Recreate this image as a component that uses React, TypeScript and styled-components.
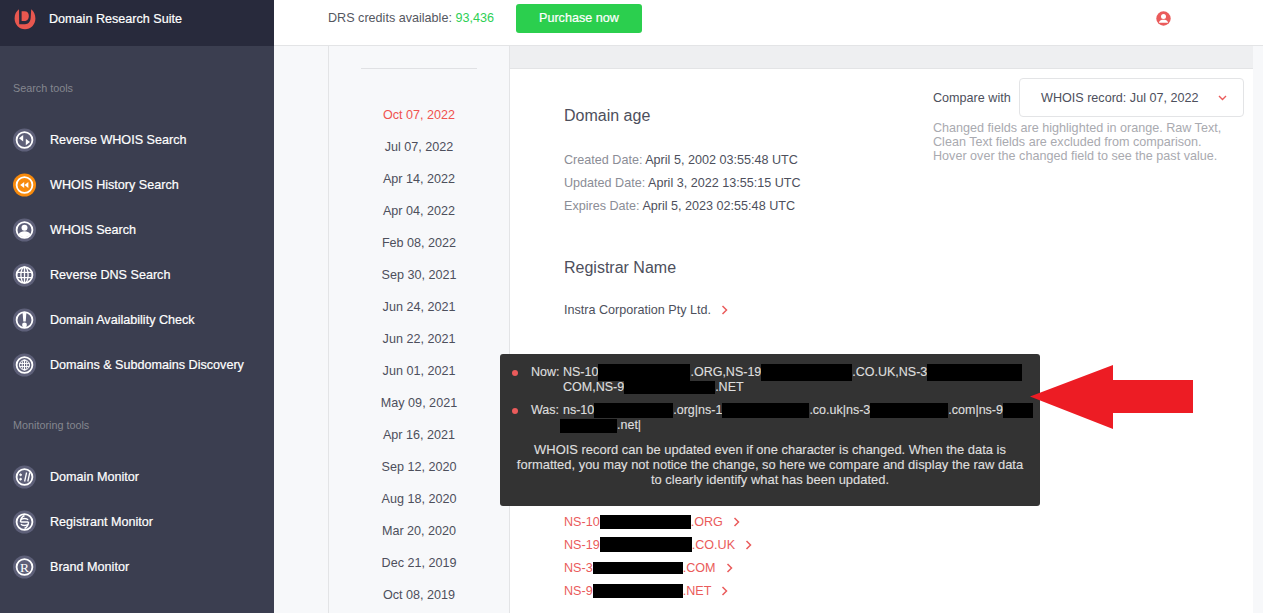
import type { ReactNode } from "react";
import styled, { createGlobalStyle } from "styled-components";

const dates = [
  "Oct 07, 2022",
  "Jul 07, 2022",
  "Apr 14, 2022",
  "Apr 04, 2022",
  "Feb 08, 2022",
  "Sep 30, 2021",
  "Jun 24, 2021",
  "Jun 22, 2021",
  "Jun 01, 2021",
  "May 09, 2021",
  "Apr 16, 2021",
  "Sep 12, 2020",
  "Aug 18, 2020",
  "Mar 20, 2020",
  "Dec 21, 2019",
  "Oct 08, 2019",
];

// has to exist before the tool list below uses it
const BrandGlyph = styled.text`
  fill: #fff;
  font-family: "Liberation Serif", serif;
  font-size: 13.5px;
  text-anchor: middle;
  -webkit-text-stroke: 0;
`;

const NavIcon = ({ children, active }: { children: ReactNode; active?: boolean }) => (
  <svg width="23" height="24" viewBox="0 0 23 24">
    <circle cx="11.5" cy="12" r="11.5" fill={active ? "#f78a0c" : "#5e6079"} />
    <circle cx="11.5" cy="12" r="7.9" fill="none" stroke="#fff" strokeWidth="1.8" />
    {children}
  </svg>
);

const searchTools: { label: string; active?: boolean; glyph: ReactNode }[] = [
  {
    label: "Reverse WHOIS Search",
    glyph: (
      <g fill="#fff">
        <path d="M10.2 7v6.4L6 10.2z" />
        <path d="M12.8 10.8v6.4l4.2-3.2z" />
      </g>
    ),
  },
  {
    label: "WHOIS History Search",
    active: true,
    glyph: (
      <g fill="#fff">
        <path d="M11.2 9v6L7.2 12z" />
        <path d="M15.4 9v6l-4-3z" />
      </g>
    ),
  },
  {
    label: "WHOIS Search",
    glyph: (
      <g fill="#fff">
        <circle cx="11.5" cy="9.8" r="3" />
        <path d="M5.6 16.2c1.2-2.2 3.4-3 5.9-3s4.7.8 5.9 3c-1.4 1.8-3.6 3-5.9 3s-4.5-1.2-5.9-3z" />
      </g>
    ),
  },
  {
    label: "Reverse DNS Search",
    glyph: (
      <g fill="none" stroke="#fff" strokeWidth="1.3">
        <ellipse cx="11.5" cy="12" rx="3.6" ry="8" />
        <path d="M11.5 4v16M3.8 9.4h15.4M3.8 14.6h15.4" />
      </g>
    ),
  },
  {
    label: "Domain Availability Check",
    glyph: (
      <g fill="#fff">
        <path d="M9.6 4.5h3.8l-.7 9h-2.4z" />
        <circle cx="11.5" cy="17" r="2.4" />
      </g>
    ),
  },
  {
    label: "Domains & Subdomains Discovery",
    glyph: (
      <g fill="none" stroke="#fff" strokeWidth="1">
        <circle cx="11.5" cy="12" r="5" />
        <ellipse cx="11.5" cy="12" rx="2.3" ry="5" />
        <path d="M11.5 7v10M6.5 10.4h10M6.5 13.6h10" />
      </g>
    ),
  },
];

const monitoringTools: { label: string; glyph: ReactNode }[] = [
  {
    label: "Domain Monitor",
    glyph: (
      <g fill="#fff" stroke="#fff">
        <circle cx="7.6" cy="9.8" r="0.9" />
        <circle cx="7.6" cy="14.2" r="0.9" />
        <path d="M11.6 16.5l2-9M14.8 16.5l2-9" strokeWidth="1.3" />
      </g>
    ),
  },
  {
    label: "Registrant Monitor",
    glyph: (
      <g fill="none" stroke="#fff" strokeWidth="1.4">
        <path d="M11.5 5.5c-3 1.4-4 3.6-4 6.5M11.5 18.5c3-1.4 4-3.6 4-6.5" />
        <path d="M7.5 12h8M8 10c1-2 6-2 7 0M8 14c1 2 6 2 7 0" />
      </g>
    ),
  },
  {
    label: "Brand Monitor",
    glyph: (
      <BrandGlyph x="11.5" y="16.6">
        R
      </BrandGlyph>
    ),
  },
];

const servers = [
  { start: "NS-10", bar: 91, height: 14, end: ".ORG" },
  { start: "NS-19", bar: 92, height: 15, end: ".CO.UK" },
  { start: "NS-3", bar: 90, height: 12, end: ".COM" },
  { start: "NS-9", bar: 90, height: 14, end: ".NET" },
];

const Chevron = () => (
  <ChevronMark width="7" height="10" viewBox="0 0 7 10">
    <path d="M1.5 1l4 4-4 4" fill="none" stroke="#ea5b5b" strokeWidth="1.5" />
  </ChevronMark>
);

const App = () => {
  return (
    <>
      <GlobalStyle />
      <Page>
        <Sidebar>
          <Brand>
            <svg width="22" height="22" viewBox="0 0 22 22">
              <path
                d="M5 1.2C2.2 3 .6 6.4.6 10.4c0 6 4.6 10.8 10.4 10.8s10.4-4.8 10.4-10.8c0-3.8-1.5-7.2-4.2-9.2l-.5 8.6c-.3 4.2-2.3 6.4-5.7 6.4H5.2z"
                fill="#e8574f"
              />
              <path
                d="M7.6 3.2h2.8c3 0 4.4 2 4.4 4.8s-1.4 5-4.4 5H7.6z"
                fill="#e8574f"
              />
            </svg>
            <BrandName>Domain Research Suite</BrandName>
          </Brand>
          <SectionLabel>Search tools</SectionLabel>
          <NavList>
            {searchTools.map((tool) => (
              <NavItem key={tool.label}>
                <NavIcon active={tool.active}>{tool.glyph}</NavIcon>
                {tool.label}
              </NavItem>
            ))}
          </NavList>
          <SectionLabel>Monitoring tools</SectionLabel>
          <NavList>
            {monitoringTools.map((tool) => (
              <NavItem key={tool.label}>
                <NavIcon>{tool.glyph}</NavIcon>
                {tool.label}
              </NavItem>
            ))}
          </NavList>
        </Sidebar>
        <Main>
          <TopBar>
            <Credits>
              DRS credits available: <CreditCount>93,436</CreditCount>
            </Credits>
            <PurchaseButton>Purchase now</PurchaseButton>
            <UserIcon width="15" height="15" viewBox="0 0 15 15">
              <circle cx="7.5" cy="7.5" r="7.2" fill="#ea5b5b" />
              <circle cx="7.5" cy="5.6" r="2.5" fill="#fff" />
              <path d="M3 11.2c.8-1.8 2.4-2.4 4.5-2.4s3.7.6 4.5 2.4v.6H3z" fill="#fff" />
            </UserIcon>
          </TopBar>
          <Body>
            <DateColumn>
              <DateRule />
              {dates.map((date, index) => (
                <DateItem key={date} $active={index === 0}>
                  {date}
                </DateItem>
              ))}
            </DateColumn>
            <Detail>
              <Strip />
              <Content>
                <RecordColumn>
                  <Heading>Domain age</Heading>
                  <DateFacts>
                    <Fact>
                      <FactLabel>Created Date:</FactLabel> April 5, 2002 03:55:48 UTC
                    </Fact>
                    <Fact>
                      <FactLabel>Updated Date:</FactLabel> April 3, 2022 13:55:15 UTC
                    </Fact>
                    <Fact>
                      <FactLabel>Expires Date:</FactLabel> April 5, 2023 02:55:48 UTC
                    </Fact>
                  </DateFacts>
                  <RegistrarHeading>Registrar Name</RegistrarHeading>
                  <Registrar>
                    Instra Corporation Pty Ltd.
                    <Chevron />
                  </Registrar>
                  <ServerList>
                    {servers.map((server) => (
                      <ServerLink key={server.start}>
                        {server.start}
                        <Redact $w={server.bar} $h={server.height} />
                        {server.end}
                        <Chevron />
                      </ServerLink>
                    ))}
                  </ServerList>
                </RecordColumn>
                <ComparePanel>
                  <CompareRow>
                    <CompareLabel>Compare with</CompareLabel>
                    <CompareSelect>
                      WHOIS record: Jul 07, 2022
                      <svg width="9" height="6" viewBox="0 0 9 6">
                        <path d="M1 1l3.5 3.5L8 1" fill="none" stroke="#ea5b5b" strokeWidth="1.4" />
                      </svg>
                    </CompareSelect>
                  </CompareRow>
                  <CompareNote>
                    Changed fields are highlighted in orange. Raw Text,
                    <br />
                    Clean Text fields are excluded from comparison.
                    <br />
                    Hover over the changed field to see the past value.
                  </CompareNote>
                </ComparePanel>
              </Content>
            </Detail>
            <RightGutter />
          </Body>
        </Main>
        <Tooltip>
          <TipRow>
            <TipDot />
            <TipLabel>Now:</TipLabel>
            <TipValue>
              <TipLine>
                NS-10
                <Redact $w={92} $h={17} />
                .ORG,NS-19
                <Redact $w={91} $h={17} />
                .CO.UK,NS-3
                <Redact $w={95} $h={17} />
              </TipLine>
              <TipLine>
                COM,NS-9
                <Redact $w={91} $h={13} />
                .NET
              </TipLine>
            </TipValue>
          </TipRow>
          <TipRow>
            <TipDot />
            <TipLabel>Was:</TipLabel>
            <TipValue>
              <TipLine>
                ns-10
                <Redact $w={79} $h={15} />
                .org|ns-1
                <Redact $w={87} $h={15} />
                .co.uk|ns-3
                <Redact $w={78} $h={15} />
                .com|ns-9
                <Redact $w={30} $h={15} />
              </TipLine>
              <TipLine>
                <HangingRedact $w={57} $h={14} />
                .net|
              </TipLine>
            </TipValue>
          </TipRow>
          <TipNote>
            WHOIS record can be updated even if one character is changed. When the data is
            <br />
            formatted, you may not notice the change, so here we compare and display the raw data
            <br />
            to clearly identify what has been updated.
          </TipNote>
        </Tooltip>
        <RedArrow width="164" height="64" viewBox="0 0 164 64">
          <path d="M0 31.5L83 0v15h80v33H83v16z" fill="#ed1c24" />
        </RedArrow>
      </Page>
    </>
  );
};

export default App;

const GlobalStyle = createGlobalStyle`
  html, body {
    margin: 0;
    padding: 0;
  }
  body {
    font-family: "Liberation Sans", Arial, sans-serif;
    font-size: 12.6px;
    background: #fff;
  }
  * {
    box-sizing: border-box;
  }
`;

const Page = styled.div`
  position: relative;
  display: grid;
  grid-template-columns: 274px 1fr;
  width: 1263px;
  height: 613px;
  overflow: hidden;
`;

const Sidebar = styled.aside`
  display: flex;
  flex-direction: column;
  height: 613px;
  overflow: hidden;
  background: #3b3e50;
`;

const Brand = styled.div`
  display: flex;
  flex: none;
  align-items: center;
  gap: 13px;
  height: 46px;
  padding: 0 0 0 14px;
  background: #282a3c;
  & svg {
    margin-top: -8px;
  }
`;

const BrandName = styled.span`
  margin-top: -9px;
  color: #fff;
  -webkit-text-stroke: 0.2px #fff;
`;

const SectionLabel = styled.div`
  flex: none;
  height: 14px;
  margin: 35px 0 0 13px;
  color: #85878f;
  font-size: 10.8px;
  line-height: 14px;
`;

const NavList = styled.nav`
  display: flex;
  flex: none;
  flex-direction: column;
  margin: 22px 0 31px;
  & + div {
    margin-top: 0;
  }
`;

const NavItem = styled.a`
  display: flex;
  align-items: center;
  gap: 14px;
  height: 45px;
  padding-left: 13px;
  color: #fff;
  -webkit-text-stroke: 0.2px #fff;
`;

const Main = styled.main`
  display: flex;
  flex-direction: column;
  min-width: 0;
  height: 613px;
`;

const TopBar = styled.header`
  display: flex;
  flex: none;
  align-items: flex-start;
  height: 46px;
  padding: 4px 92px 0 54px;
  border-bottom: 1px solid #e3e4e6;
  background: #fff;
`;

const Credits = styled.div`
  margin-top: 6px;
  color: #55575f;
  line-height: 16px;
`;

const CreditCount = styled.span`
  color: #2ecf55;
`;

const PurchaseButton = styled.button`
  width: 126px;
  height: 29px;
  margin-left: 22px;
  padding: 0 0 2px;
  border: 0;
  border-radius: 3px;
  background: #2bcf4e;
  color: #fff;
  font-family: inherit;
  font-size: 12.6px;
  -webkit-text-stroke: 0.2px #fff;
`;

const UserIcon = styled.svg`
  margin: 7px 0 0 auto;
`;

const Body = styled.div`
  display: flex;
  flex: 1;
  min-height: 0;
  padding-left: 54px;
  background: #f7f8fa;
`;

const DateColumn = styled.div`
  display: flex;
  flex-direction: column;
  align-items: center;
  width: 182px;
  border-left: 1px solid #e3e4e6;
  border-right: 1px solid #e3e4e6;
`;

const DateRule = styled.div`
  flex: none;
  width: 116px;
  height: 1px;
  margin: 22px 0 30px;
  background: #e0e1e4;
`;

const DateItem = styled.div<{ $active: boolean }>`
  flex: none;
  height: 32px;
  color: ${(props) => (props.$active ? "#f0524f" : "#4d4f5c")};
  line-height: 32px;
`;

const Detail = styled.div`
  display: flex;
  flex-direction: column;
  flex: 1;
  min-width: 0;
`;

const Strip = styled.div`
  flex: none;
  height: 23px;
  border-bottom: 1px solid #e3e4e6;
  background: #eeeff1;
`;

const Content = styled.div`
  display: flex;
  flex: 1;
  justify-content: space-between;
  background: #fff;
  padding: 9px 9px 0 54px;
`;

const RecordColumn = styled.div`
  display: flex;
  flex-direction: column;
`;

const Heading = styled.h2`
  margin: 27px 0 0;
  color: #4d4f5c;
  font-size: 16px;
  font-weight: 400;
  line-height: 22px;
`;

const RegistrarHeading = styled(Heading)`
  margin-top: 43px;
`;

const DateFacts = styled.div`
  display: flex;
  flex-direction: column;
  gap: 7px;
  margin-top: 25px;
`;

const Fact = styled.div`
  color: #4d4f5c;
  line-height: 16px;
`;

const FactLabel = styled.span`
  color: #8b8d96;
`;

const Registrar = styled.div`
  display: flex;
  align-items: center;
  margin-top: 23px;
  color: #4d4f5c;
  line-height: 16px;
`;

const ChevronMark = styled.svg`
  margin-left: 10px;
`;

const ServerList = styled.div`
  display: flex;
  flex-direction: column;
  margin-top: 192px;
`;

const ServerLink = styled.a`
  display: flex;
  align-items: center;
  height: 23px;
  color: #ea5b5b;
`;

const Redact = styled.span<{ $w: number; $h: number }>`
  display: inline-block;
  flex: none;
  width: ${(props) => props.$w}px;
  height: ${(props) => props.$h}px;
  background: #000;
  vertical-align: middle;
`;

const HangingRedact = styled(Redact)`
  margin-left: -3px;
`;

const ComparePanel = styled.div`
  display: flex;
  flex-direction: column;
  width: 311px;
`;

const CompareRow = styled.div`
  display: flex;
  align-items: center;
  justify-content: space-between;
`;

const CompareLabel = styled.span`
  color: #4d4f5c;
  white-space: nowrap;
`;

const CompareSelect = styled.div`
  display: flex;
  align-items: center;
  justify-content: space-between;
  flex: none;
  width: 225px;
  height: 39px;
  padding: 0 16px 0 21px;
  border: 1px solid #e3e4e6;
  border-radius: 4px;
  color: #4d4f5c;
`;

const CompareNote = styled.p`
  margin: 4px 0 0;
  color: #a9aab0;
  line-height: 14px;
  white-space: nowrap;
`;

const RightGutter = styled.div`
  flex: none;
  width: 10px;
`;

const Tooltip = styled.div`
  position: absolute;
  top: 354px;
  left: 500px;
  width: 540px;
  height: 152px;
  padding: 11px 12px 0;
  border-radius: 3px;
  background: #333;
  color: #dedede;
  font-size: 12.5px;
  line-height: 15px;
  -webkit-text-stroke: 0.15px #dedede;
`;

const TipRow = styled.div`
  display: flex;
  align-items: flex-start;
  margin-bottom: 8px;
`;

const TipDot = styled.span`
  flex: none;
  width: 6px;
  height: 6px;
  margin: 5px 13px 0 0;
  border-radius: 50%;
  background: #ea5b5b;
`;

const TipLabel = styled.span`
  flex: none;
  width: 32px;
`;

const TipValue = styled.div`
  display: flex;
  flex-direction: column;
`;

const TipLine = styled.div`
  display: flex;
  align-items: center;
  height: 15px;
  white-space: nowrap;
`;

const TipNote = styled.p`
  margin: 9px 0 0;
  font-size: 12.95px;
  text-align: center;
  line-height: 15px;
`;

const RedArrow = styled.svg`
  position: absolute;
  top: 365px;
  left: 1030px;
`;
